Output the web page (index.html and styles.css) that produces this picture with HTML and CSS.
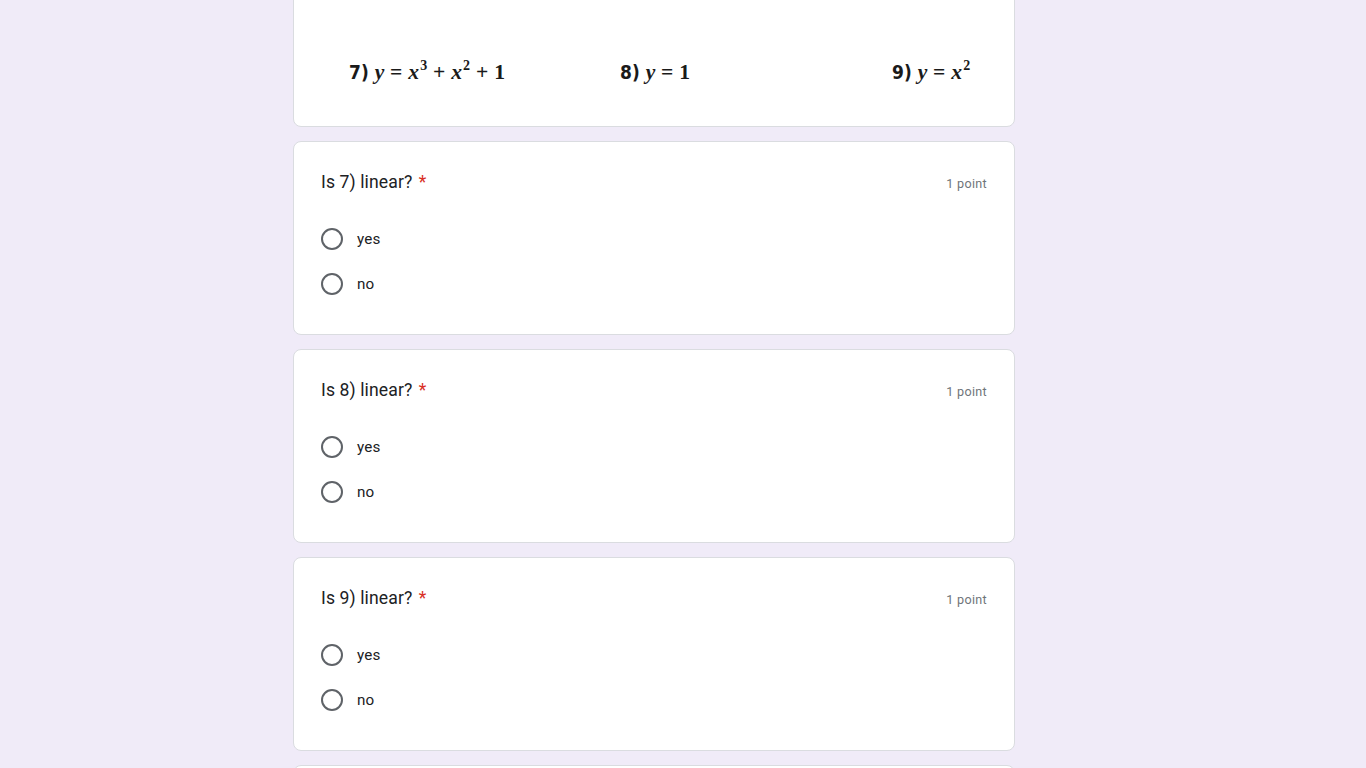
FILE: index.html
```html
<!DOCTYPE html>
<html>
<head>
<meta charset="utf-8">
<link rel="stylesheet" href="styles.css">
</head>
<body>
<div class="page">
  <div class="card card-image">
    <div class="equations">
      <div class="eq"><span class="num">7)</span> <i>y</i> = <i>x</i><sup>3</sup> + <i>x</i><sup>2</sup> + 1</div>
      <div class="eq"><span class="num">8)</span> <i>y</i> = 1</div>
      <div class="eq"><span class="num">9)</span> <i>y</i> = <i>x</i><sup>2</sup></div>
    </div>
  </div>

  <div class="card question">
    <div class="q-head">
      <div class="q-title">Is 7) linear? <span class="req">*</span></div>
      <div class="q-points">1 point</div>
    </div>
    <div class="options">
      <div class="option"><span class="radio"></span><span class="label">yes</span></div>
      <div class="option"><span class="radio"></span><span class="label">no</span></div>
    </div>
  </div>

  <div class="card question">
    <div class="q-head">
      <div class="q-title">Is 8) linear? <span class="req">*</span></div>
      <div class="q-points">1 point</div>
    </div>
    <div class="options">
      <div class="option"><span class="radio"></span><span class="label">yes</span></div>
      <div class="option"><span class="radio"></span><span class="label">no</span></div>
    </div>
  </div>

  <div class="card question">
    <div class="q-head">
      <div class="q-title">Is 9) linear? <span class="req">*</span></div>
      <div class="q-points">1 point</div>
    </div>
    <div class="options">
      <div class="option"><span class="radio"></span><span class="label">yes</span></div>
      <div class="option"><span class="radio"></span><span class="label">no</span></div>
    </div>
  </div>

  <div class="card question"></div>
</div>
</body>
</html>
```

FILE: styles.css
```css
html, body {
  margin: 0;
  padding: 0;
  background: #f0ebf8;
  height: 768px;
  overflow: hidden;
  font-family: Roboto, "Liberation Sans", Arial, sans-serif;
}

.page {
  width: 722px;
  margin-left: 293px;
  display: flex;
  flex-direction: column;
  gap: 14px;
  margin-top: -12px;
}

.card {
  background: #fff;
  border: 1px solid #dadce0;
  border-radius: 8px;
  box-sizing: border-box;
}

.card-image {
  height: 139px;
  padding-top: 70px;
}

.equations {
  display: grid;
  grid-template-columns: 271px 272px auto;
  padding-left: 55px;
}

.eq {
  font-family: "Liberation Serif", "Times New Roman", serif;
  font-weight: bold;
  font-size: 21.6px;
  color: #1a1a1a;
  line-height: 26px;
  white-space: nowrap;
  word-spacing: 0.5px;
}

.eq .num {
  font-family: "DejaVu Sans Condensed", "DejaVu Sans", sans-serif;
  font-stretch: condensed;
  font-weight: bold;
  font-size: 19px;
}

.eq i {
  font-style: italic;
}

.eq sup {
  font-size: 14px;
  vertical-align: 9px;
  line-height: 0;
  margin-left: 1px;
}

.question {
  padding: 28px 27px 28px 27px;
  height: 194px;
}

.q-head {
  display: flex;
  justify-content: space-between;
  align-items: center;
  height: 24px;
}

.q-title {
  font-size: 17.6px;
  letter-spacing: 0.1px;
  color: #202124;
  line-height: 24px;
}

.req {
  color: #d93025;
  margin-left: 2px;
}

.q-points {
  font-size: 12.6px;
  color: #70757a;
  letter-spacing: 0.3px;
  padding-top: 3px;
}

.options {
  margin-top: 22px;
  display: flex;
  flex-direction: column;
}

.option {
  height: 45px;
  display: flex;
  align-items: center;
}

.radio {
  width: 18px;
  height: 18px;
  border: 2px solid #5f6368;
  border-radius: 50%;
  flex: none;
}

.label {
  margin-left: 14px;
  font-size: 15.2px;
  letter-spacing: 0.2px;
  color: #202124;
}
```
